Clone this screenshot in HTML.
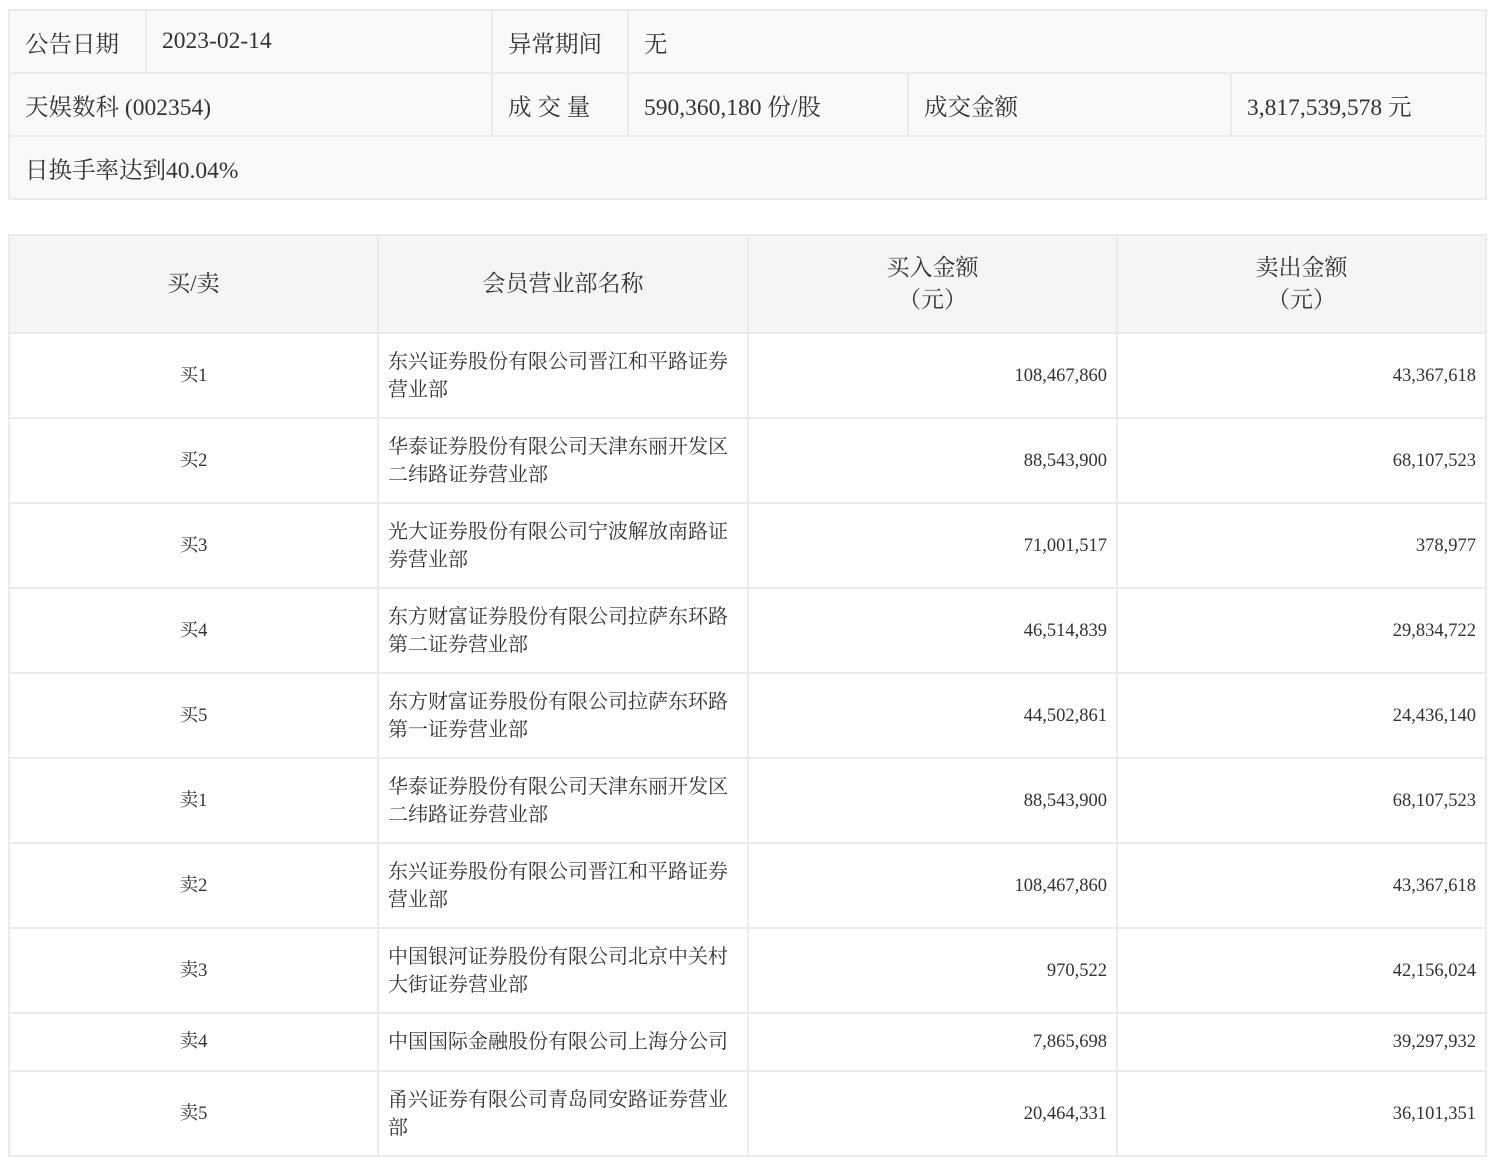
<!DOCTYPE html>
<html><head><meta charset="utf-8"><style>
body{margin:0;background:#fff;font-family:"Liberation Serif","Noto Serif CJK SC",serif;color:#333;}
table{border-collapse:collapse;position:absolute;left:8px;table-layout:fixed;}
td{border:2px solid #ebebeb;padding:0;}
#t1{top:9px;width:1477px;background:#f9f9f9;font-size:23.5px;}
#t1 td{height:61px;padding-left:15px;}
#t2{top:234px;width:1477px;font-size:18.5px;}
#t2 tr.h td{background:#f5f5f5;font-size:23px;text-align:center;height:96px;line-height:32px;}
#t2 td{height:83px;line-height:28px;}
#t2 td.c{text-align:center;}
#t2 td.n{padding-left:9px;font-size:20px;}
#t2 td.r{text-align:right;padding-right:9px;}
#t2 tr.s td{height:56px;}
</style></head><body>
<table id="t1">
<colgroup><col style="width:137px"><col style="width:346px"><col style="width:136px"><col style="width:280px"><col style="width:323px"><col style="width:255px"></colgroup>
<tr><td>公告日期</td><td>2023-02-14</td><td>异常期间</td><td colspan="3">无</td></tr>
<tr><td colspan="2">天娱数科 (002354)</td><td>成 交 量</td><td>590,360,180 份/股</td><td>成交金额</td><td>3,817,539,578 元</td></tr>
<tr><td colspan="6">日换手率达到40.04%</td></tr>
</table>
<table id="t2">
<colgroup><col style="width:369px"><col style="width:370px"><col style="width:369px"><col style="width:369px"></colgroup>
<tr class="h"><td>买/卖</td><td>会员营业部名称</td><td>买入金额<br>（元）</td><td>卖出金额<br>（元）</td></tr>
<tr><td class="c">买1</td><td class="n">东兴证券股份有限公司晋江和平路证券<br>营业部</td><td class="r">108,467,860</td><td class="r">43,367,618</td></tr>
<tr><td class="c">买2</td><td class="n">华泰证券股份有限公司天津东丽开发区<br>二纬路证券营业部</td><td class="r">88,543,900</td><td class="r">68,107,523</td></tr>
<tr><td class="c">买3</td><td class="n">光大证券股份有限公司宁波解放南路证<br>券营业部</td><td class="r">71,001,517</td><td class="r">378,977</td></tr>
<tr><td class="c">买4</td><td class="n">东方财富证券股份有限公司拉萨东环路<br>第二证券营业部</td><td class="r">46,514,839</td><td class="r">29,834,722</td></tr>
<tr><td class="c">买5</td><td class="n">东方财富证券股份有限公司拉萨东环路<br>第一证券营业部</td><td class="r">44,502,861</td><td class="r">24,436,140</td></tr>
<tr><td class="c">卖1</td><td class="n">华泰证券股份有限公司天津东丽开发区<br>二纬路证券营业部</td><td class="r">88,543,900</td><td class="r">68,107,523</td></tr>
<tr><td class="c">卖2</td><td class="n">东兴证券股份有限公司晋江和平路证券<br>营业部</td><td class="r">108,467,860</td><td class="r">43,367,618</td></tr>
<tr><td class="c">卖3</td><td class="n">中国银河证券股份有限公司北京中关村<br>大街证券营业部</td><td class="r">970,522</td><td class="r">42,156,024</td></tr>
<tr class="s"><td class="c">卖4</td><td class="n">中国国际金融股份有限公司上海分公司</td><td class="r">7,865,698</td><td class="r">39,297,932</td></tr>
<tr><td class="c">卖5</td><td class="n">甬兴证券有限公司青岛同安路证券营业<br>部</td><td class="r">20,464,331</td><td class="r">36,101,351</td></tr>
</table>
</body></html>
